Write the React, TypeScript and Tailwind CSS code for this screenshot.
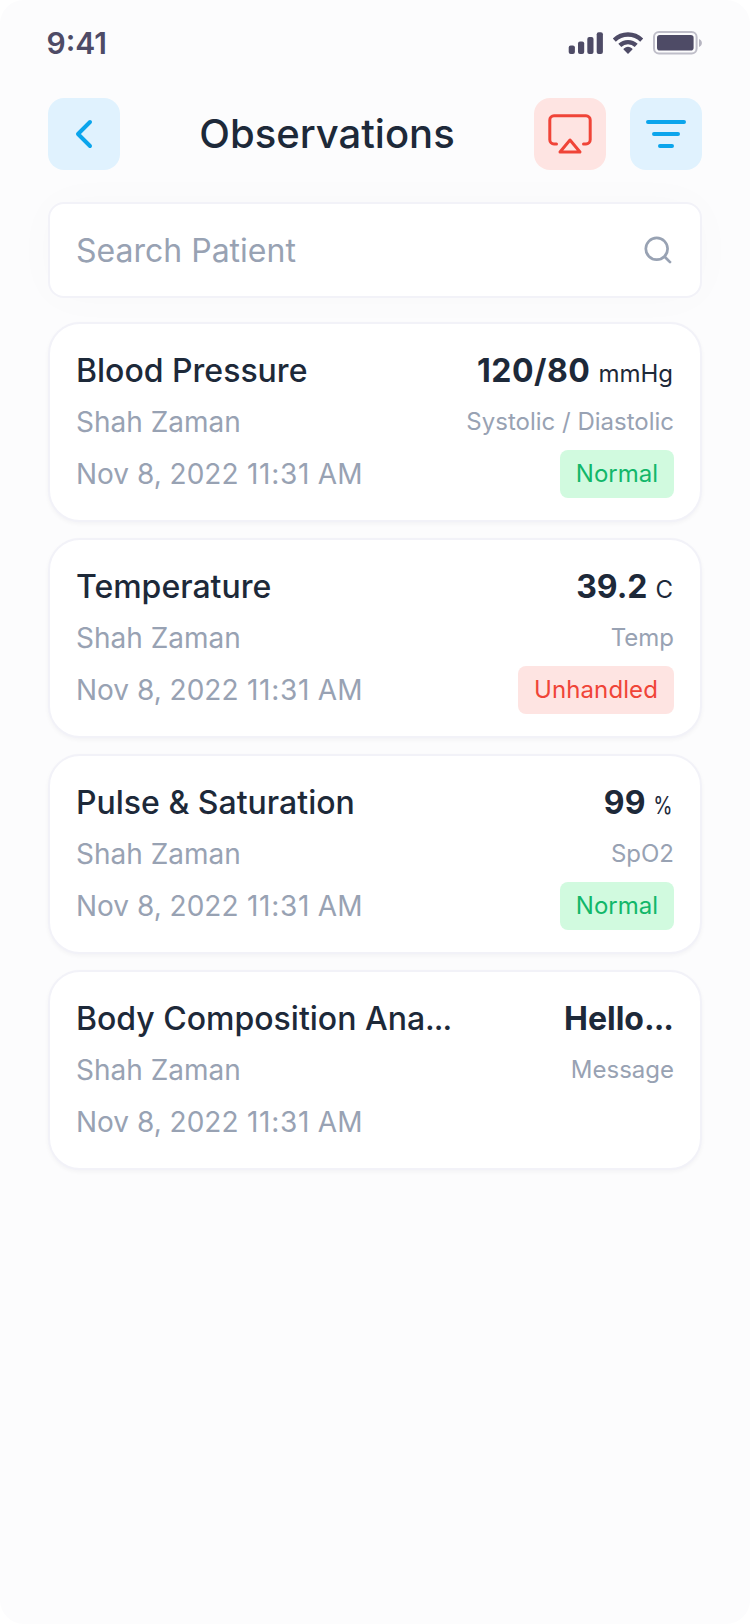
type Observation = {
  title: string;
  truncated?: boolean;
  value: string;
  unit?: string;
  label: string;
  status?: 'Normal' | 'Unhandled';
};

const observations: Observation[] = [
  { title: 'Blood Pressure', value: '120/80', unit: 'mmHg', label: 'Systolic / Diastolic', status: 'Normal' },
  { title: 'Temperature', value: '39.2', unit: 'C', label: 'Temp', status: 'Unhandled' },
  { title: 'Pulse & Saturation', value: '99', unit: '%', label: 'SpO2', status: 'Normal' },
  { title: 'Body Composition Ana', truncated: true, value: 'Hello', label: 'Message' },
];

const badgeStyles = {
  Normal: 'bg-[#d1fadf] text-[#12b76a]',
  Unhandled: 'bg-[#fee4e2] tracking-[0.1px] text-[#f04438]',
};

function StatusBar() {
  return (
    <div className="flex h-[86px] items-center justify-between pr-[47px] pl-[46.5px]">
      <span className="text-[30px] leading-[36px] font-semibold text-[#4e4b66]">9:41</span>
      <svg className="h-6 w-[135px]" viewBox="568 31 135 24" fill="#4e4b66">
        <rect x="568.7" y="45.5" width="6.2" height="8.5" rx="2" />
        <rect x="578" y="41.5" width="6.2" height="12.5" rx="2" />
        <rect x="587.3" y="37" width="6.2" height="17" rx="2" />
        <rect x="596.7" y="32.2" width="6.2" height="21.8" rx="2" />
        <g fill="none" stroke="#4e4b66" strokeWidth="4.3">
          <path d="M614.3 40.1a19.6 19.6 0 0 1 27.4 0" />
          <path d="M619.8 45.4a11.8 11.8 0 0 1 16.4 0" />
        </g>
        <path d="M628 54l-4.2-4.2c-.5-.5-.5-1 0-1.4a6.6 6.6 0 0 1 8.4 0c.5.4.5.9 0 1.4z" />
        <rect x="654" y="32" width="42.6" height="21.6" rx="5" fill="none" stroke="#4e4b66" strokeOpacity=".35" strokeWidth="2" />
        <rect x="657" y="35" width="36.6" height="15.6" rx="2.8" />
        <path d="M699 39v8c1.700-.7 2.900-2.200 2.900-4s-1.200-3.300-2.900-4z" fillOpacity=".4" />
      </svg>
    </div>
  );
}

function Header() {
  return (
    <header className="mt-3 flex h-[72px] items-center justify-between px-12">
      <button aria-label="Back" className="size-[72px] rounded-[16px] bg-[#e0f2fe]">
        <svg viewBox="0 0 72 72" fill="none" stroke="#0ba5ec" strokeWidth="4" strokeLinecap="round" strokeLinejoin="round">
          <path d="M42 24 30 36l12 12" />
        </svg>
      </button>
      <h1 className="text-[40px] leading-[48px] font-medium text-[#1d2939]">Observations</h1>
      <div className="flex gap-6">
        <button aria-label="Cast" className="size-[72px] rounded-[16px] bg-[#fee4e2]">
          <svg viewBox="0 0 72 72" fill="none" stroke="#f04438" strokeWidth="3" strokeLinecap="round" strokeLinejoin="round">
            <path d="M22.500 46H20a4.200 4.200 0 0 1-4.200-4.200V22a4.200 4.200 0 0 1 4.200-4.200h32a4.200 4.200 0 0 1 4.200 4.200v19.800A4.200 4.200 0 0 1 52 46h-2.500" />
            <path d="M36 42 46 54H26z" />
          </svg>
        </button>
        <button aria-label="Filter" className="size-[72px] rounded-[16px] bg-[#e0f2fe]">
          <svg viewBox="0 0 72 72" fill="none" stroke="#0ba5ec" strokeWidth="4" strokeLinecap="round">
            <path d="M18 24h36M24 36h24M30 48h12" />
          </svg>
        </button>
      </div>
    </header>
  );
}

function SearchField() {
  return (
    <div className="mx-12 mt-8 flex h-24 items-center justify-between rounded-[16px] border-2 border-[#f2f2f8] bg-white pr-[26px] pl-[26px] shadow-[0_0_48px_rgba(0,0,0,0.02)]">
      <span className="pt-0.5 text-[32px] leading-[48px] text-[#98a2b3]">Search Patient</span>
      <svg className="-mt-0.5 h-8 w-8" viewBox="642 233 32 32" fill="none" stroke="#98a2b3" strokeWidth="2.700" strokeLinecap="round">
        <circle cx="656.7" cy="248.800" r="10.900" />
        <path d="m664.700 256.800 5.300 5.300" />
      </svg>
    </div>
  );
}

function Ellipsis() {
  return <span className="tracking-[-1px]">...</span>;
}

function Unit({ unit }: { unit: string }) {
  if (unit === '%') {
    return <span className="-ml-1 inline-block origin-right scale-x-[0.82] text-[24px]">%</span>;
  }
  return <span className="text-[24px]">{unit}</span>;
}

function ObservationCard({ item }: { item: Observation }) {
  return (
    <article className="flex h-[200px] justify-between rounded-[32px] border-2 border-[#f2f2f8] bg-white px-[26px] py-[22px] shadow-[0_2px_4px_rgba(16,24,40,0.04)]">
      <div className="flex flex-col gap-1 leading-[48px] whitespace-nowrap">
        <h2 className="h-12 text-[32px] leading-[50px] font-medium text-[#1d2939]">
          {item.title}
          {item.truncated && <Ellipsis />}
        </h2>
        <p className="text-[28px] leading-[48px] text-[#98a2b3]">Shah Zaman</p>
        <p className="text-[28px] leading-[48px] text-[#98a2b3]">
          Nov 8, 2022 <span className="ml-[0.6px] tracking-[0.7px]">11:31</span> AM
        </p>
      </div>
      <div className="flex flex-col items-end gap-1 whitespace-nowrap text-[#1d2939]">
        <div className="mr-px flex h-12 items-baseline gap-2 leading-[50px]">
          <span className={item.value.includes('/') ? 'text-[32px] font-bold tracking-[0.5px]' : 'text-[32px] font-bold'}>
            {item.value}
            {item.truncated && <Ellipsis />}
          </span>
          {item.unit && <Unit unit={item.unit} />}
        </div>
        <p className="text-[24px] leading-[48px] text-[#98a2b3]">{item.label}</p>
        {item.status && (
          <span className={`rounded-[8px] px-4 text-[24px] leading-[48px] ${badgeStyles[item.status]}`}>{item.status}</span>
        )}
      </div>
    </article>
  );
}

export default function App() {
  return (
    <div className="bg-white font-['Inter',sans-serif]">
      <main className="h-[1624px] w-[750px] overflow-hidden rounded-[24px] bg-[#fcfcfd]">
        <StatusBar />
        <Header />
        <SearchField />
        <section className="mt-6 flex flex-col gap-4 px-12">
          {observations.map((item) => (
            <ObservationCard key={item.title} item={item} />
          ))}
        </section>
      </main>
    </div>
  );
}
